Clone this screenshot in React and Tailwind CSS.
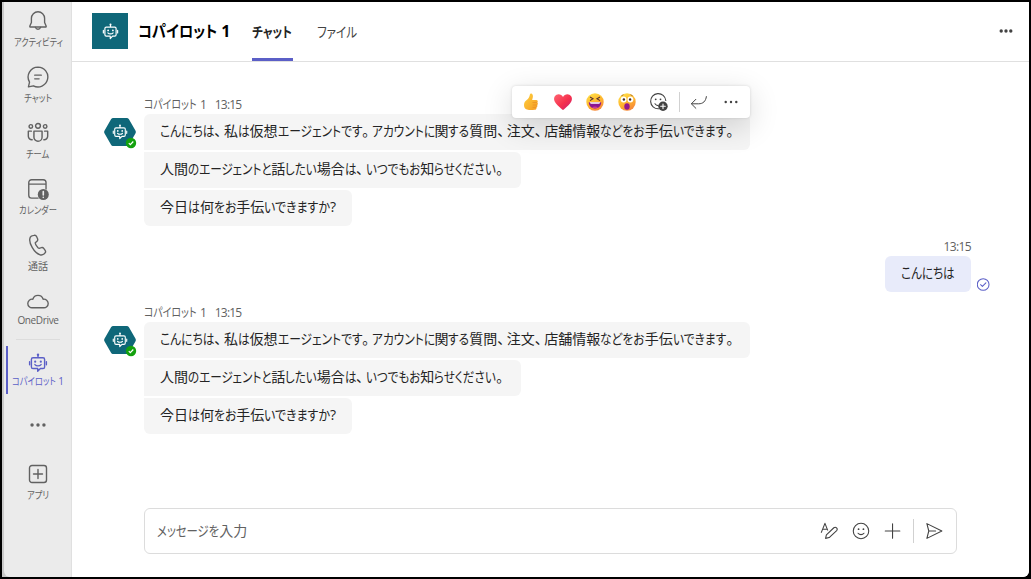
import React, { useCallback } from "react";

const font = "font-['Open_Sans','Noto_Sans_CJK_JP',sans-serif]";

// Kana are condensed next to kanji, as in a Japanese UI face.
// The box shrinks together with the scaled glyphs.
const Kana = ({ scale, children }) => {
  const fit = useCallback(
    (el) => {
      if (!el) return;
      const inner = el.firstChild;
      el.style.width = `${inner.offsetWidth * scale}px`;
      inner.style.transform = `scaleX(${scale})`;
    },
    [scale]
  );

  return (
    <span ref={fit} className="inline-block whitespace-nowrap">
      <span className="inline-block origin-left">{children}</span>
    </span>
  );
};

const JpText = ({ children, scale = 0.825 }) => (
  <span className="whitespace-nowrap [font-feature-settings:'palt']">
    {children.split(/([\u3041-\u30ff]+|[\u3001\u3002])/).map((run, i) => {
      if (/^[\u3001\u3002]/.test(run)) {
        return (
          <span key={i} className="tracking-[2.5px]">
            {run}
          </span>
        );
      }
      return i % 2 ? (
        <Kana key={i} scale={scale}>
          {run}
        </Kana>
      ) : (
        run
      );
    })}
  </span>
);

const Svg = ({ size = 20, width = 1.25, className = "", children }) => (
  <svg
    width={size}
    height={size}
    viewBox="0 0 20 20"
    fill="none"
    stroke="currentColor"
    strokeWidth={width}
    strokeLinecap="round"
    strokeLinejoin="round"
    className={`shrink-0 ${className}`}
  >
    {children}
  </svg>
);

const BellIcon = () => (
  <Svg size={22}>
    <path d="M10 1.600a6 6 0 0 0-6 6v3.800l-1.400 3.200c-.2.5.1.9.6.9h13.600c.5 0 .8-.4.6-.9L16 11.400V7.600a6 6 0 0 0-6-6Z" />
    <path d="M7.700 15.800a2.400 2.400 0 0 0 4.600 0" />
  </Svg>
);

const ChatIcon = () => (
  <Svg size={22}>
    <path d="M10 1a9 9 0 1 1-4.200 17L1.300 19l1-4.400A9 9 0 0 1 10 1Z" />
    <path d="M7 8.300h6M7 11.700h4" />
  </Svg>
);

const TeamIcon = () => (
  <Svg size={22} width={1.3}>
    <circle cx="10" cy="3.500" r="2.200" />
    <circle cx="3.500" cy="4" r="1.600" />
    <circle cx="16.500" cy="4" r="1.600" />
    <path d="M6.300 8.300h7.400v5.500a3.700 3.700 0 0 1-7.400 0Z" />
    <path d="M4 8.300H1.200V13a3.200 3.200 0 0 0 3.500 3.100M16 8.300h2.800V13a3.200 3.200 0 0 1-3.500 3.100" />
  </Svg>
);

const CalendarIcon = () => (
  <Svg size={22}>
    <path d="M10 18.300H4.200a2.600 2.600 0 0 1-2.600-2.600V4.200a2.600 2.600 0 0 1 2.600-2.600h10.500a2.600 2.600 0 0 1 2.600 2.600V10M1.600 5.600h15.700" />
    <circle cx="14.800" cy="15" r="5" fill="currentColor" stroke="none" />
    <path d="M14.800 12.300v3.100M14.800 17.500v.1" stroke="#ebebeb" strokeWidth="1.500" />
  </Svg>
);

const PhoneIcon = () => (
  <Svg size={22}>
    <path d="m5.200 1.500 1.100-.3c1-.3 2 .2 2.400 1.100l.9 2c.3.800.1 1.700-.5 2.300L7.500 8c-.1.900.9 2.900 2.500 4.500.5.400.8.600 1 .5l2-.6c.9-.3 1.700 0 2.200.7l1.300 1.800c.5.800.5 1.800-.2 2.400l-.9.900c-1 .8-2.300 1.100-3.500.7-2.800-.9-5.200-3.200-7.200-6.700-2-3.400-2.800-6.700-1.800-9.100.4-.8 1.300-1.400 2.300-1.600Z" />
  </Svg>
);

const CloudIcon = () => (
  <Svg size={22}>
    <path d="M5.200 16.100a3.900 3.900 0 1 1 .1-7.700 4.900 4.900 0 0 1 9.400 0 3.900 3.900 0 1 1 .1 7.700Z" />
  </Svg>
);

const BotIcon = ({ size = 20, width = 1.4 }) => (
  <Svg size={size} width={width}>
    <path d="M5 4.800h10a1.600 1.600 0 0 1 1.600 1.600v7.500a1.600 1.600 0 0 1-1.600 1.600h-2.600L9.700 18.300v-2.800H5a1.600 1.600 0 0 1-1.600-1.600V6.400A1.600 1.600 0 0 1 5 4.800ZM10 4.500V2.200" />
    <path d="M1.600 8.700v3M18.400 8.700v3M6.900 11.600c1.500 1.700 4.700 1.700 6.200 0" />
    <g fill="currentColor" stroke="none">
      <circle cx="10" cy="1.700" r="1.200" />
      <circle cx="7.200" cy="8.700" r="1.100" />
      <circle cx="12.800" cy="8.700" r="1.100" />
    </g>
  </Svg>
);

const DotsIcon = ({ size = 18, r = 1.9, gap = 6.6 }) => (
  <svg width={size} height={size} viewBox="0 0 20 20" fill="currentColor">
    <circle cx={10 - gap} cy="10" r={r} />
    <circle cx="10" cy="10" r={r} />
    <circle cx={10 + gap} cy="10" r={r} />
  </svg>
);

const AppsIcon = () => (
  <Svg size={20} width={1.4}>
    <rect x="1.500" y="1.500" width="17" height="17" rx="2.500" />
    <path d="M10 5.500v9M5.500 10h9" />
  </Svg>
);

const ThumbsUp = () => (
  <svg width="18" height="18" viewBox="0 0 18 18">
    <defs>
      <linearGradient id="thumb" x1="0" y1="0" x2="1" y2="1">
        <stop offset="0" stopColor="#ffd23e" />
        <stop offset="1" stopColor="#f59a23" />
      </linearGradient>
    </defs>
    <path d="M8 1.200c.3-1 2.400-.8 2.800 1 .3 1.600-.1 3-.7 4.800h4c1.700 0 2.200 1.700 1.200 2.600.9.800.7 2-.1 2.500.5.900.1 2-.7 2.300.3 1.200-.5 2.300-1.900 2.400-2.400.4-5.200.5-7.600-.2C3 16 2 14.500 2 12c0-2.300 1-3.900 2.700-5C6.500 5.600 7.300 4 8 1.200Z" fill="url(#thumb)" />
    <path d="M10.500 9.500h4.600M10.800 12h4M10.600 14.400h3.500" stroke="#e58a22" strokeWidth=".6" />
  </svg>
);

const Heart = () => (
  <svg width="20" height="18" viewBox="0 0 20 18">
    <defs>
      <linearGradient id="heart" x1="0" y1="0" x2="1" y2="1">
        <stop offset="0" stopColor="#ff6572" />
        <stop offset=".55" stopColor="#f5304d" />
        <stop offset="1" stopColor="#c91e74" />
      </linearGradient>
    </defs>
    <path d="M10 4C8.300.5 3.800.3 1.800 3.200c-1.500 2.400-.6 5.200 1.200 7.300 1.900 2.300 4.500 4.400 6.200 6.100.5.500 1.100.5 1.600 0 1.700-1.700 4.300-3.800 6.200-6.100 1.800-2.100 2.700-4.900 1.200-7.300C16.200.3 11.700.5 10 4Z" fill="url(#heart)" />
  </svg>
);

const FaceBase = ({ id, children }) => (
  <svg width="18" height="18" viewBox="0 0 18 18">
    <defs>
      <linearGradient id={id} x1=".2" y1="0" x2=".7" y2="1">
        <stop offset="0" stopColor="#ffe04a" />
        <stop offset=".5" stopColor="#ffb82e" />
        <stop offset="1" stopColor="#f5833c" />
      </linearGradient>
    </defs>
    <circle cx="9" cy="9" r="8.700" fill={`url(#${id})`} />
    {children}
  </svg>
);

const Laugh = () => (
  <FaceBase id="laugh">
    <path d="m4 4 3 1.800-3 1.800M14 4l-3 1.800 3 1.800" fill="none" stroke="#5a3430" strokeWidth="1.100" />
    <path d="M2.800 9.300h12.400c0 3.600-2.600 6.200-6.200 6.200s-6.200-2.600-6.200-6.200Z" fill="#8b1590" />
    <path d="M3.800 9.300h10.400c0 1-.5 1.400-1.400 1.400H5.200c-.9 0-1.400-.4-1.400-1.400Z" fill="#fff" />
    <path d="M6 14.400c1.800-1.300 4.200-1.300 6 0-1.800 1.400-4.200 1.400-6 0Z" fill="#c93a9a" />
  </FaceBase>
);

const Surprised = () => (
  <FaceBase id="surprised">
    <circle cx="5.600" cy="6.500" r="2.900" fill="#fff" />
    <circle cx="12.400" cy="6.500" r="2.900" fill="#fff" />
    <circle cx="5.900" cy="6.500" r="1.200" fill="#44302c" />
    <circle cx="12.100" cy="6.500" r="1.200" fill="#44302c" />
    <path d="M3.400 2.800 5.500 1.700M14.600 2.800l-2.100-1.100" stroke="#9a5a26" strokeWidth=".8" />
    <ellipse cx="9" cy="13.500" rx="2.700" ry="3.300" fill="#96178a" />
  </FaceBase>
);

const MoreReactions = () => (
  <Svg size={20} width={1.1} className="-ml-px">
    <path d="M9.500 16.800A7.600 7.600 0 1 1 16.800 8.500M6 11.800c.8 1.200 1.900 1.800 3.200 1.800" />
    <circle cx="6.700" cy="7.300" r=".9" fill="currentColor" stroke="none" />
    <circle cx="11.500" cy="7.300" r=".9" fill="currentColor" stroke="none" />
    <circle cx="14" cy="14.300" r="4.700" fill="currentColor" stroke="none" />
    <path d="M14 12v4.600M11.700 14.300h4.600" stroke="#fff" />
  </Svg>
);

const ReplyIcon = () => (
  <Svg size={18} width={1.1}>
    <path d="M6.500 7 1.500 12l5 5M1.800 12h7.700c5 0 8-2.700 8.700-8" />
  </Svg>
);

const FormatIcon = () => (
  <Svg size={18} width={1.2}>
    <path d="m1.500 11.500 4-10 3 7.500M3 8h5" />
    <path d="m6.200 18.200.9-4 8.300-7.800a2.200 2.200 0 0 1 3.100 3.100l-8.300 7.800Z" />
  </Svg>
);

const SmileIcon = () => (
  <Svg size={18} width={1.2}>
    <circle cx="10" cy="10" r="8.600" />
    <path d="M6.700 12.500c1.700 2 4.900 2 6.600 0" />
    <circle cx="7.300" cy="8" r="1" fill="currentColor" stroke="none" />
    <circle cx="12.700" cy="8" r="1" fill="currentColor" stroke="none" />
  </Svg>
);

const PlusIcon = () => (
  <Svg size={18} width={1.2}>
    <path d="M9.500 1.900v16.200M1.400 10h16.200" />
  </Svg>
);

const SendIcon = () => (
  <Svg size={18} width={1.2}>
    <path d="M2.100 1.800 18.700 10 2.100 18.200 4.200 10ZM4.200 10h7.600" />
  </Svg>
);

const navItems = [
  { label: "アクティビティ", icon: <BellIcon /> },
  { label: "チャット", icon: <ChatIcon />, scale: 0.86 },
  { label: "チーム", icon: <TeamIcon /> },
  { label: "カレンダー", icon: <CalendarIcon /> },
  { label: "通話", icon: <PhoneIcon /> },
  { label: "OneDrive", icon: <CloudIcon />, className: "tracking-[-0.35px] -mt-0.5" },
];

const Sidebar = () => (
  <nav className="flex w-[68px] shrink-0 flex-col items-center rounded-bl-md border-r border-[#e0e0e0] bg-[#ebebeb] pt-2 text-[10px] leading-3 text-[#616161]">
    {navItems.map((item) => (
      <div key={item.label} className="flex h-14 flex-col items-center gap-1 pl-px">
        {item.icon}
        <span className={item.className}>
          <JpText scale={item.scale}>{item.label}</JpText>
        </span>
      </div>
    ))}
    <div className="-mt-[7px] h-px w-11 bg-[#dcdcdc]" />
    <div className="mt-1.5 ml-1 flex h-12 w-full items-center border-l-2 border-[#5b5fc7] text-[#5b5fc7]">
      <div className="flex w-[60px] flex-col items-center gap-0.5 whitespace-nowrap pb-px">
        <BotIcon size={20} />
        <JpText>コパイロット 1</JpText>
      </div>
    </div>
    <div className="mt-[22px]">
      <DotsIcon />
    </div>
    <div className="mt-[30px] flex flex-col items-center gap-[5px] pl-px">
      <AppsIcon />
      <JpText>アプリ</JpText>
    </div>
  </nav>
);

const Header = () => (
  <header className="flex h-[60px] shrink-0 items-stretch border-b border-[#e0e0e0] pl-5 pr-[15px]">
    <div className="mt-[11px] flex size-9 items-center justify-center bg-[#0f6779] text-white">
      <BotIcon size={17} />
    </div>
    <h1 className="ml-2.5 flex w-[114px] items-center pb-px text-[16px] font-bold text-black">
      <JpText scale={0.89}>コパイロット 1</JpText>
    </h1>
    <div className="flex w-[41px] items-center border-b-[3px] border-[#5b5fc7] pt-0.5 text-[14px] font-semibold text-[#242424]">
      <JpText>チャット</JpText>
    </div>
    <div className="ml-6 flex items-center pb-px text-[14px] text-[#424242]">
      <JpText>ファイル</JpText>
    </div>
    <div className="ml-auto flex items-center pb-0.5 text-[#424242]">
      <DotsIcon size={16} gap={6} r={2.1} />
    </div>
  </header>
);

const Avatar = () => (
  <div className="relative mt-[22px] mr-2 h-7 w-8 shrink-0">
    <svg width="32" height="28" viewBox="0 0 32 28" fill="#0f6779">
      <path d="M9.500 0h13c1.200 0 2 .5 2.600 1.500l6.300 11c.6 1 .6 2 0 3l-6.300 11c-.6 1-1.400 1.500-2.600 1.500h-13c-1.200 0-2-.5-2.600-1.500L.6 15.500c-.6-1-.6-2 0-3l6.300-11C7.500.5 8.300 0 9.500 0Z" />
    </svg>
    <div className="absolute left-[8px] top-[6px] text-white">
      <BotIcon size={16} />
    </div>
    <svg className="absolute left-[21px] top-[19px]" width="12" height="12" viewBox="0 0 12 12">
      <circle cx="6" cy="6" r="5.200" fill="#13a10e" />
      <path d="m3.800 6.200 1.500 1.500 3-3.200" fill="none" stroke="#fff" strokeWidth="1.200" />
    </svg>
  </div>
);

const Toolbar = () => (
  <div className="absolute -top-[28px] right-0 flex h-8 w-[238px] items-center rounded bg-white text-[#424242] shadow-[0_8px_30px_rgba(0,0,0,0.16),0_0_3px_rgba(0,0,0,0.14)]">
    <div className="flex w-[168px] items-center gap-3.5 pl-2.5">
      <ThumbsUp />
      <div className="-mx-px flex">
        <Heart />
      </div>
      <Laugh />
      <Surprised />
      <MoreReactions />
    </div>
    <div className="ml-[-1px] h-5 w-px bg-[#d1d1d1]" />
    <div className="ml-2.5">
      <ReplyIcon />
    </div>
    <div className="ml-[15px]">
      <DotsIcon size={16} r={1.5} />
    </div>
  </div>
);

const Bubble = ({ className, scale, children }) => (
  <div className={`flex h-9 items-center rounded-r-md bg-[#f5f5f5] pb-1 pl-4 text-[14px] text-[#242424] ${className}`}>
    <JpText scale={scale}>{children}</JpText>
  </div>
);

const BotMessage = ({ active }) => (
  <div className="flex pl-8">
    <Avatar />
    <div className="flex w-[606px] flex-col gap-0.5">
      <div className="flex h-4 items-center gap-2 pt-0.5 text-[12px] text-[#616161]">
        <JpText>コパイロット 1</JpText>
        <span className="tracking-[-0.8px]">13:15</span>
      </div>
      <div className="relative">
        <Bubble className="w-[606px] rounded-tl-md" scale={0.837}>
          こんにちは、私は仮想エージェントです。アカウントに関する質問、注文、店舗情報などをお手伝いできます。
        </Bubble>
        {active && <Toolbar />}
      </div>
      <Bubble className="w-[377px]">人間のエージェントと話したい場合は、いつでもお知らせください。</Bubble>
      <Bubble className="w-[208px] rounded-bl-md" scale={0.855}>
        今日は何をお手伝いできますか?
      </Bubble>
    </div>
  </div>
);

const UserMessage = () => (
  <div className="mt-3 flex items-end justify-end pr-10 text-[#242424]">
    <div className="flex flex-col items-end gap-0.5">
      <span className="h-4 pt-px text-[12px] leading-4 tracking-[-0.6px] text-[#616161]">13:15</span>
      <div className="flex h-9 w-[86px] items-center rounded-md bg-[#e8ebfa] pb-1 pl-4 text-[14px]">
        <JpText>こんにちは</JpText>
      </div>
    </div>
    <Svg size={13} className="-mr-px mb-px ml-1.5 text-[#5b5fc7]" width={1.6}>
      <circle cx="9.500" cy="10" r="9" />
      <path d="m5.500 10.300 2.800 2.700 5.400-5.600" />
    </Svg>
  </div>
);

const Composer = () => (
  <div className="mt-auto mb-[23px] ml-[72px] flex h-[46px] w-[813px] items-center rounded-md border border-[#dcdcdc] pl-3 pr-[13px] text-[#424242]">
    <span className="pb-0.5 text-[14px] text-[#616161]">
      <JpText scale={0.81}>メッセージを入力</JpText>
    </span>
    <div className="ml-auto flex items-center gap-3.5">
      <FormatIcon />
      <SmileIcon />
      <PlusIcon />
      <div className="-mx-[3px] h-6 w-px bg-[#d1d1d1]" />
      <SendIcon />
    </div>
  </div>
);

export default function App() {
  return (
    <div className={`h-[579px] w-[1031px] overflow-hidden bg-black p-0.5 ${font}`}>
      <div className="flex h-full rounded-br-md bg-[#c9c9c9] pl-0.5">
        <Sidebar />
        <main className="flex min-w-0 flex-1 flex-col rounded-br-md bg-white">
          <Header />
          <div className="flex flex-col pt-[34px]">
            <BotMessage active />
            <UserMessage />
            <div className="h-3" />
            <BotMessage />
          </div>
          <Composer />
        </main>
      </div>
    </div>
  );
}
